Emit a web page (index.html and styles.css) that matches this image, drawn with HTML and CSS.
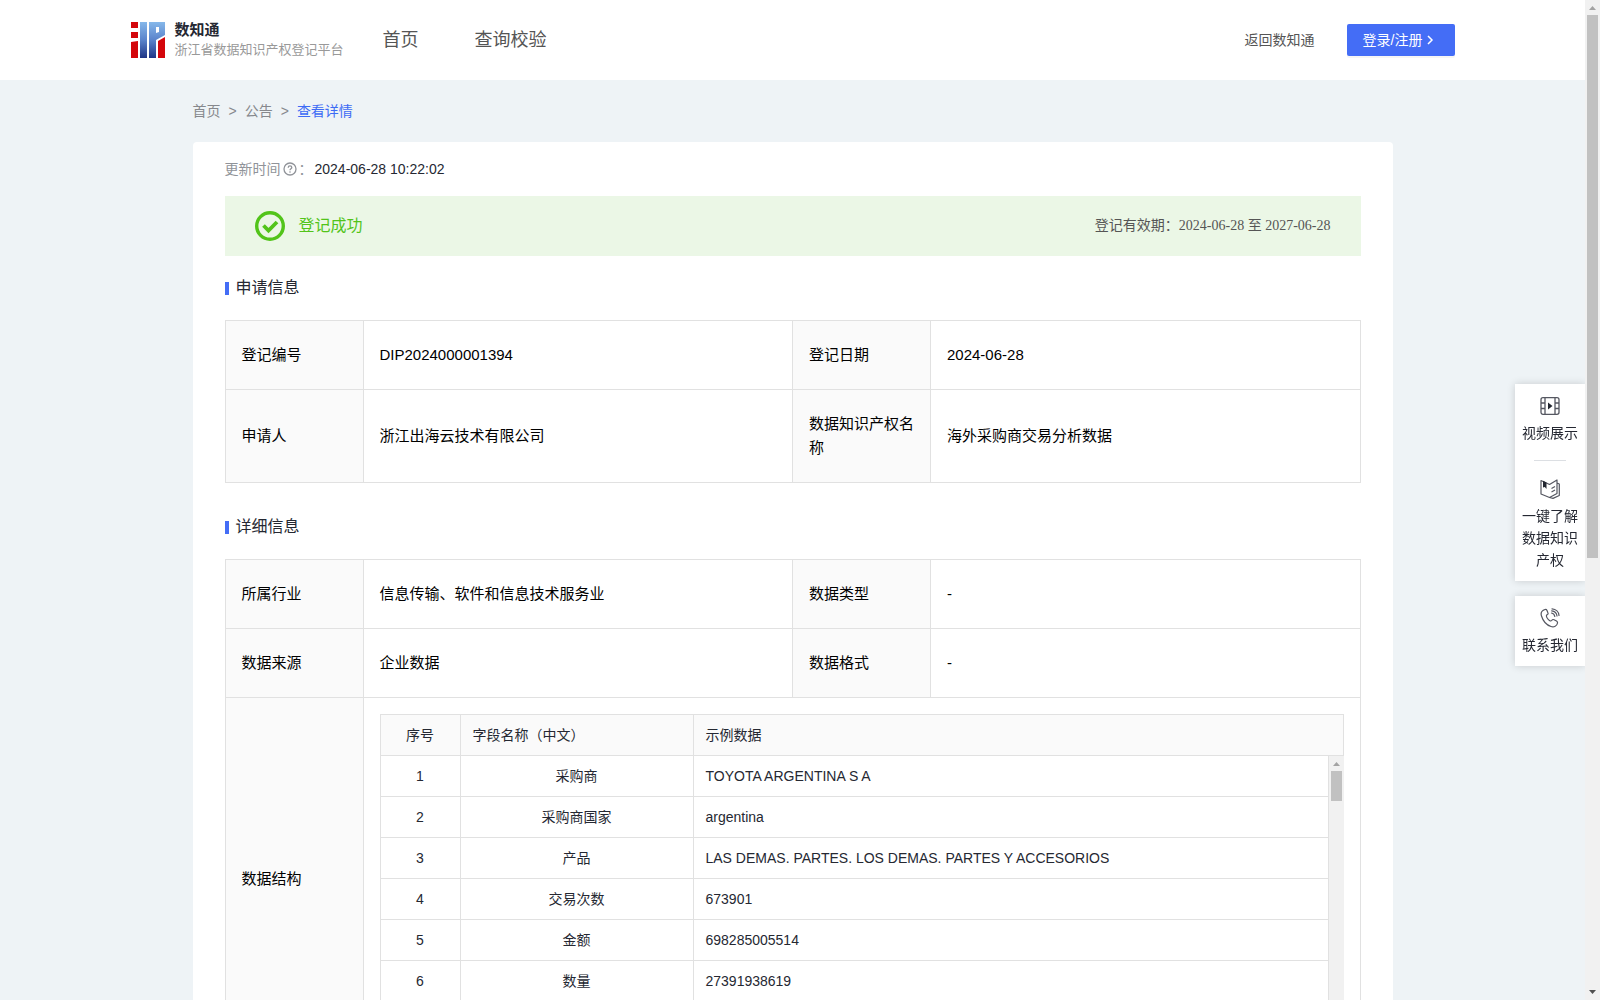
FILE: index.html
```html
<!DOCTYPE html>
<html lang="zh-CN">
<head>
<meta charset="utf-8">
<title>数知通</title>
<link rel="stylesheet" href="styles.css">
</head>
<body>
<div class="page">
  <header class="header">
    <div class="header-inner">
      <a class="brand" href="#">
        <svg class="logo" width="34" height="36" viewBox="0 0 34 36" aria-hidden="true">
          <defs>
            <linearGradient id="blue" x1="0" y1="0" x2="0" y2="36" gradientUnits="userSpaceOnUse">
              <stop offset="0" stop-color="#86b8ea"/>
              <stop offset="0.5" stop-color="#5a83cb"/>
              <stop offset="1" stop-color="#1f3586"/>
            </linearGradient>
          </defs>
          <path fill="#d4060b" d="M0 0h7v6H0zM0 10h7v6H0zM0 20l7-1v17H0zM27 19l7-4v21h-7z"/>
          <path fill="url(#blue)" d="M9 0h7v36H9zM18 0h16v13l-9 5v18h-7zM25 5v6l3-1V5z" fill-rule="evenodd"/>
        </svg>
        <span class="brand-text">
          <strong class="brand-name">数知通</strong>
          <span class="brand-sub">浙江省数据知识产权登记平台</span>
        </span>
      </a>
      <nav class="nav">
        <a href="#">首页</a>
        <a href="#">查询校验</a>
      </nav>
      <div class="header-actions">
        <a class="back-link" href="#">返回数知通</a>
        <button class="login" type="button">登录/注册
          <svg width="8" height="10" viewBox="0 0 8 10" aria-hidden="true"><path d="M2 1l4 4-4 4" fill="none" stroke="#fff" stroke-width="1.5"/></svg>
        </button>
      </div>
    </div>
  </header>

  <main class="main">
    <nav class="crumbs">
      <a href="#">首页</a><span>&gt;</span><a href="#">公告</a><span>&gt;</span><a class="current" href="#">查看详情</a>
    </nav>

    <article class="card">
      <p class="updated">
        <span class="updated-label">更新时间<svg width="14" height="14" viewBox="0 0 14 14" aria-hidden="true"><g fill="none" stroke="#909399" stroke-width="1.3"><circle cx="7" cy="7" r="6"/><path d="M5.2 5.7c0-1.1.8-1.8 1.8-1.8s1.8.7 1.8 1.6c0 1.2-1.8 1.3-1.8 2.7"/></g><circle cx="7" cy="10" r=".8" fill="#909399"/></svg>：</span>
        <time>2024-06-28 10:22:02</time>
      </p>

      <div class="banner">
        <svg width="30" height="30" viewBox="0 0 30 30" aria-hidden="true"><g fill="none" stroke="#52c41a"><circle cx="15" cy="15" r="13.3" stroke-width="3.4"/><path d="M8.5 14.5l5 5 8.5-8.5" stroke-width="3.8"/></g></svg>
        <span class="banner-status">登记成功</span>
        <span class="banner-term">登记有效期：2024-06-28 至 2027-06-28</span>
      </div>

      <h2 class="section-title">申请信息</h2>
      <table class="info">
        <colgroup><col class="col-label"><col><col class="col-label"><col></colgroup>
        <tr><th scope="row">登记编号</th><td>DIP2024000001394</td><th scope="row">登记日期</th><td>2024-06-28</td></tr>
        <tr><th scope="row">申请人</th><td>浙江出海云技术有限公司</td><th scope="row">数据知识产权名称</th><td>海外采购商交易分析数据</td></tr>
      </table>

      <h2 class="section-title">详细信息</h2>
      <table class="info">
        <colgroup><col class="col-label"><col><col class="col-label"><col></colgroup>
        <tr><th scope="row">所属行业</th><td>信息传输、软件和信息技术服务业</td><th scope="row">数据类型</th><td>-</td></tr>
        <tr><th scope="row">数据来源</th><td>企业数据</td><th scope="row">数据格式</th><td>-</td></tr>
        <tr>
          <th scope="row">数据结构</th>
          <td class="nested" colspan="3">
            <div class="fields">
              <table class="fields-table">
                <colgroup><col class="col-no"><col class="col-name"><col></colgroup>
                <tr><th class="center">序号</th><th>字段名称（中文）</th><th>示例数据</th></tr>
              </table>
              <div class="fields-body">
                <div class="fields-scroll">
                  <table class="fields-table">
                    <colgroup><col class="col-no"><col class="col-name"><col></colgroup>
                    <tr><td class="center">1</td><td class="center">采购商</td><td>TOYOTA ARGENTINA S A</td></tr>
                    <tr><td class="center">2</td><td class="center">采购商国家</td><td>argentina</td></tr>
                    <tr><td class="center">3</td><td class="center">产品</td><td>LAS DEMAS. PARTES. LOS DEMAS. PARTES Y ACCESORIOS</td></tr>
                    <tr><td class="center">4</td><td class="center">交易次数</td><td>673901</td></tr>
                    <tr><td class="center">5</td><td class="center">金额</td><td>698285005514</td></tr>
                    <tr><td class="center">6</td><td class="center">数量</td><td>27391938619</td></tr>
                  </table>
                </div>
                <div class="scrollbar" aria-hidden="true">
                  <svg width="15" height="15" viewBox="0 0 15 15"><path d="M4 10l3.500-4L11 10z" fill="#a3a3a3"/></svg>
                  <div class="scroll-track"><div class="scroll-thumb scroll-thumb-short"></div></div>
                  <svg width="15" height="15" viewBox="0 0 15 15"><path d="M4 5l3.500 4L11 5z" fill="#505050"/></svg>
                </div>
              </div>
            </div>
          </td>
        </tr>
      </table>
    </article>
  </main>
</div>

<div class="scrollbar" aria-hidden="true">
  <svg width="15" height="15" viewBox="0 0 15 15"><path d="M4 10l3.500-4L11 10z" fill="#a3a3a3"/></svg>
  <div class="scroll-track"><div class="scroll-thumb"></div></div>
  <svg width="15" height="15" viewBox="0 0 15 15"><path d="M4 5l3.500 4L11 5z" fill="#505050"/></svg>
</div>

<aside class="tools">
  <div class="tools-group">
    <a class="tool" href="#">
      <svg width="20" height="20" viewBox="0 0 20 20" aria-hidden="true"><g fill="none" stroke="#555761" stroke-width="1.3"><rect x="1" y="1.700" width="18" height="16.600" rx="2"/><path d="M5 2v16M15 2v16M1 7h4M1 12.500h4M15 7h4M15 12.500h4"/></g><path d="M8 6.500v7l4.500-3.500z" fill="#222630"/></svg>
      <span>视频展示</span>
    </a>
    <a class="tool tool-divided" href="#">
      <svg width="20" height="20" viewBox="0 0 20 20" aria-hidden="true"><g fill="none" stroke="#555761" stroke-width="1.200" stroke-linejoin="round"><path d="M1 1.500l8.500 4L17 1v13.500L9.500 18.500 1 15zM17 4l2.300 1v11.500L13 19.400l-3.500-.9M11.500 9.500l3.500-2M11.500 13l3.500-2"/></g><path d="M3 1.800l3.500 1.700v6.500L4.800 8 3 8.500z" fill="#222630"/></svg>
      <span>一键了解数据知识产权</span>
    </a>
  </div>
  <div class="tools-group">
    <a class="tool" href="#">
      <svg width="20" height="20" viewBox="0 0 20 20" aria-hidden="true"><g fill="none" stroke="#555761" stroke-width="1.200" stroke-linecap="round"><path d="M5 1.500C2 2.500.5 5 1.500 8c1.500 5 5 9 9.500 10.500 3 1 6-.5 6.500-3.500.2-1-.3-1.500-1-2l-2.500-1.300c-1.500-.7-2 .3-2.500 1-1 1-3-.7-4-2.200s-1.500-2.800-.7-3.500C7.500 6.500 8.500 6 8 5L7 2.500C6.600 1.600 6 1.200 5 1.500z"/><path d="M11.500 5c2 .3 3 1.500 3.300 3.500M11.700 2.800c3 .3 5 2.200 5.300 5.200M12 .8c4 .2 6.800 3 7 6.700"/></g></svg>
      <span>联系我们</span>
    </a>
  </div>
</aside>
</body>
</html>
```
FILE: styles.css
```css
* {
  box-sizing: border-box;
}

body {
  display: flex;
  height: 100vh;
  margin: 0;
  background: #eef3f6;
  color: #252832;
  font: 14px/22px "Liberation Sans", "Noto Sans CJK SC", sans-serif;
}

a {
  color: inherit;
  text-decoration: none;
}

svg {
  flex: none;
}

.page {
  flex: 1;
  min-width: 0;
  overflow-y: auto;
  scrollbar-width: none;
}

/* Scrollbars */
.scrollbar {
  display: flex;
  flex: none;
  flex-direction: column;
  width: 15px;
  background: #f1f1f1;
}

.scroll-track {
  flex: 1;
  padding: 0 2px;
}

.scroll-thumb {
  height: 56%;
  background: #c1c1c1;
}

.scroll-thumb-short {
  height: 30px;
}

/* Header */
.header {
  background: #fff;
}

.header-inner {
  display: flex;
  align-items: center;
  max-width: 1324px;
  height: 80px;
  margin: 0 auto;
}

.brand {
  display: flex;
  align-items: center;
  gap: 10px;
  width: 252px;
}

.brand-text {
  display: flex;
  flex-direction: column;
  white-space: nowrap;
}

.brand-name {
  font-size: 15px;
  line-height: 20px;
}

.brand-sub {
  color: #999;
  font-size: 13px;
  line-height: 20px;
}

.nav {
  display: flex;
  gap: 56px;
  color: #555;
  font-size: 18px;
}

.header-actions {
  display: flex;
  align-items: center;
  gap: 32px;
  margin-left: auto;
}

.back-link {
  color: #555;
}

.login {
  display: flex;
  align-items: center;
  gap: 4px;
  width: 108px;
  height: 32px;
  padding: 0 16px;
  border: 0;
  border-radius: 2px;
  background: #446df6;
  box-shadow: 0 2px 0 rgba(0, 0, 0, 0.04);
  color: #fff;
  font: inherit;
  white-space: nowrap;
}

/* Content */
.main {
  max-width: 1200px;
  margin: 0 auto;
}

.crumbs {
  display: flex;
  gap: 8px;
  padding: 20px 0;
  color: #86888d;
}

.crumbs .current {
  color: #3d6bf5;
}

.card {
  padding: 16px 32px;
  border-radius: 4px;
  background: #fff;
}

.updated {
  display: flex;
  gap: 2px;
  margin: 0 0 16px;
}

.updated-label {
  display: flex;
  align-items: center;
  gap: 2px;
  color: #909399;
}

.banner {
  display: flex;
  align-items: center;
  height: 60px;
  padding: 0 30px;
  background: #ebf7e6;
}

.banner-status {
  margin-left: 14px;
  color: #52c41a;
  font-size: 16px;
}

.banner-term {
  margin-left: auto;
  color: #555;
  font-family: "Liberation Serif", "Noto Sans CJK SC", serif;
}

.section-title {
  display: flex;
  align-items: center;
  gap: 7px;
  margin: 20px 0;
  font-size: 16px;
  font-weight: 400;
  line-height: 24px;
}

.section-title::before {
  width: 4px;
  height: 13px;
  background: #446df6;
  content: "";
}

.info + .section-title {
  margin-top: 32px;
}

.info {
  width: 100%;
  border-collapse: collapse;
  table-layout: fixed;
  color: #000;
  font-size: 15px;
  line-height: 24px;
}

.info th,
.info td {
  padding: 22px 16px;
  border: 1px solid #e1e1e1;
  font-weight: 400;
  text-align: left;
}

.info th {
  background: #fafafa;
}

.col-label {
  width: 138px;
}

.info .nested {
  padding: 16px;
}

/* Field list inside the details table */
.fields {
  border: solid #e1e1e1;
  border-width: 1px 0 0 1px;
}

.fields-table {
  width: 100%;
  border-collapse: separate;
  border-spacing: 0;
  table-layout: fixed;
  color: #252832;
  font-size: 14px;
}

.fields .fields-table th,
.fields .fields-table td {
  height: 41px;
  padding: 0 12px;
  border-width: 0 1px 1px 0;
}

.fields .fields-table .center {
  text-align: center;
}

.col-no {
  width: 80px;
}

.col-name {
  width: 233px;
}

.fields-body {
  display: flex;
  height: 287px;
}

.fields-scroll {
  flex: 1;
  min-width: 0;
  overflow-y: auto;
  scrollbar-width: none;
}

/* Floating shortcuts */
.tools {
  position: fixed;
  top: 384px;
  right: 15px;
  display: flex;
  flex-direction: column;
  gap: 15px;
  width: 70px;
}

.tools-group {
  background: #fff;
  box-shadow: 0 0 8px rgba(0, 0, 0, 0.16);
  clip-path: inset(-8px 0 -8px -8px);
}

.tool {
  display: flex;
  flex-direction: column;
  align-items: center;
  gap: 6px;
  padding: 12px 7px 10px;
  text-align: center;
}

.tool-divided::before {
  width: 32px;
  height: 1px;
  margin: -6px 0 12px;
  background: #dcdfe3;
  content: "";
}
```
